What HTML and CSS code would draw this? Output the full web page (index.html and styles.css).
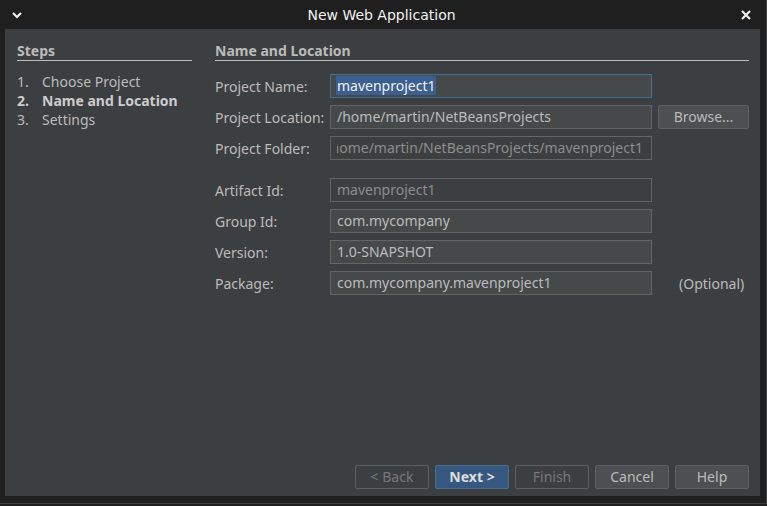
FILE: index.html
```html
<!DOCTYPE html>
<html>
<head>
<meta charset="utf-8">
<link rel="stylesheet" href="styles.css">
</head>
<body>
<div class="window">
  <div class="titlebar">
    <svg class="tb-icon chev" width="12" height="12" viewBox="0 0 12 12"><path d="M2 4 L6 8 L10 4" fill="none" stroke="#f0f0f0" stroke-width="2.2"/></svg>
    <div class="title">New Web Application</div>
    <svg class="tb-icon close" width="12" height="12" viewBox="0 0 12 12"><path d="M2 2 L10 10 M10 2 L2 10" fill="none" stroke="#f0f0f0" stroke-width="2.2"/></svg>
  </div>
  <div class="panel">
    <div class="content">
      <div class="steps">
        <div class="heading">Steps</div>
        <ol class="step-list">
          <li><span class="num">1.</span>Choose Project</li>
          <li class="current"><span class="num">2.</span>Name and Location</li>
          <li><span class="num">3.</span>Settings</li>
        </ol>
      </div>
      <div class="form">
        <div class="heading">Name and Location</div>
        <div class="rows">
          <div class="row">
            <div class="label">Project Name:</div>
            <div class="field focus"><span class="sel">mavenproject1</span></div>
          </div>
          <div class="row">
            <div class="label">Project Location:</div>
            <div class="field">/home/martin/NetBeansProjects</div>
            <div class="btn side">Browse...</div>
          </div>
          <div class="row">
            <div class="label">Project Folder:</div>
            <div class="field ro"><div class="scroller"><span>/home/martin/NetBeansProjects/mavenproject1</span></div></div>
          </div>
          <div class="row spaced">
            <div class="label">Artifact Id:</div>
            <div class="field ro">mavenproject1</div>
          </div>
          <div class="row">
            <div class="label">Group Id:</div>
            <div class="field">com.mycompany</div>
          </div>
          <div class="row">
            <div class="label">Version:</div>
            <div class="field">1.0-SNAPSHOT</div>
          </div>
          <div class="row">
            <div class="label">Package:</div>
            <div class="field">com.mycompany.mavenproject1</div>
            <div class="optional">(Optional)</div>
          </div>
        </div>
      </div>
    </div>
    <div class="buttons">
      <div class="btn disabled">&lt; Back</div>
      <div class="btn primary">Next &gt;</div>
      <div class="btn disabled">Finish</div>
      <div class="btn">Cancel</div>
      <div class="btn">Help</div>
    </div>
  </div>
</div>
</body>
</html>
```

FILE: styles.css
```css
html, body {
  margin: 0;
  padding: 0;
  background: #1f1f1f;
  width: 767px;
  height: 506px;
  overflow: hidden;
}
body {
  font-family: "Noto Sans", "Open Sans", sans-serif;
  font-size: 14px;
  color: #bbbbbb;
}
.window {
  display: flex;
  flex-direction: column;
  width: 766px;
  height: 503px;
  border-right: 1px solid #3e3e3e;
  border-bottom: 1px solid #3e3e3e;
}
.titlebar {
  height: 29px;
  display: flex;
  align-items: center;
  padding: 0 14px 0 11px;
  box-sizing: border-box;
}
.title {
  flex: 1;
  text-align: center;
  font-family: "DejaVu Sans", sans-serif;
  font-size: 14px;
  color: #f2f2f2;
  padding-top: 1px;
}
.tb-icon { display: block; }
.chev { margin-top: 1px; }
.panel {
  margin: 0 6px 0 5px;
  height: 467px;
  background: #3c3f41;
  display: flex;
  flex-direction: column;
  box-sizing: border-box;
  padding: 12px 11px 7px 12px;
}
.content {
  flex: 1;
  display: flex;
  gap: 23px;
}
.steps {
  width: 175px;
}
.heading {
  font-weight: bold;
  color: #bbbbbb;
  line-height: 19px;
  border-bottom: 1px solid #bbbbbb;
}
.step-list {
  list-style: none;
  margin: 11px 0 0 0;
  padding: 0;
}
.step-list li {
  line-height: 19px;
  display: flex;
}
.num {
  width: 25px;
}
.step-list li.current {
  font-weight: bold;
  color: #cccccc;
}
.form {
  flex: 1;
}
.rows {
  margin-top: 13px;
  display: flex;
  flex-direction: column;
  gap: 7px;
}
.row {
  display: flex;
  align-items: center;
  height: 24px;
}
.row.spaced {
  margin-top: 11px;
}
.label {
  width: 115px;
  flex: none;
}
.field {
  width: 322px;
  height: 24px;
  box-sizing: border-box;
  border: 1px solid #646464;
  background: #45494a;
  padding: 0 6px;
  line-height: 22px;
  white-space: nowrap;
  overflow: hidden;
  flex: none;
}
.field.focus {
  border-color: #466d94;
  padding-left: 5px;
}
.sel {
  background: #3b5f8f;
  color: #f0f0f0;
  display: inline-block;
  line-height: 19px;
  padding: 0 1px;
}
.field.ro {
  background: #3c3f41;
  color: #8c8c8c;
}
.scroller {
  display: flex;
  justify-content: flex-end;
  overflow: hidden;
  padding-right: 2px;
}
.scroller span { flex: none; }
.btn {
  width: 74px;
  height: 24px;
  box-sizing: border-box;
  border: 1px solid #5e6060;
  border-radius: 2px;
  background: #4c5052;
  color: #bbbbbb;
  text-align: center;
  line-height: 22px;
}
.btn.side {
  width: 91px;
  margin-left: 6px;
}
.btn.disabled {
  background: #3c3f41;
  color: #777777;
}
.btn.primary {
  background: #365880;
  border-color: #4c708c;
  color: #dddddd;
  font-weight: bold;
}
.optional {
  margin-left: 27px;
}
.buttons {
  display: flex;
  justify-content: flex-end;
  gap: 6px;
}
```
